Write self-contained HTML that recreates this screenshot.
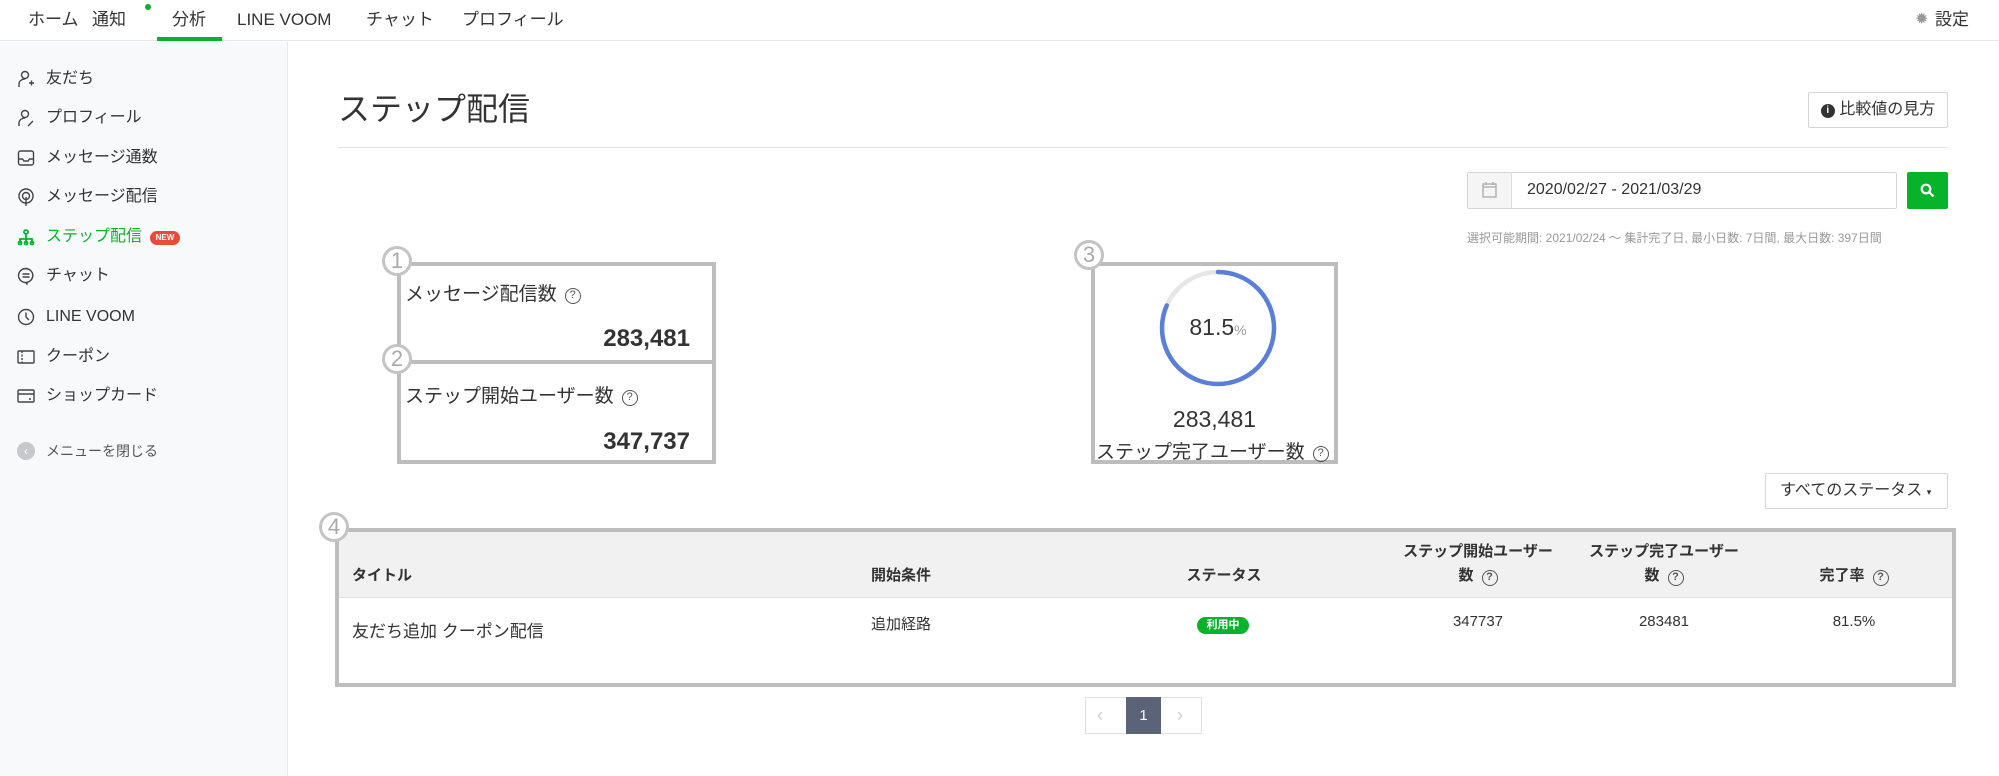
<!DOCTYPE html>
<html><head><meta charset="utf-8"><style>
*{box-sizing:border-box;margin:0;padding:0}
body{width:1999px;height:776px;overflow:hidden;background:#fff;font-family:"Liberation Sans","Noto Sans CJK JP",sans-serif;color:#333;position:relative}
.a{position:absolute;white-space:nowrap}
.nav{position:absolute;left:0;top:0;width:1999px;height:41px;border-bottom:1px solid #e6e6e6;background:#fff}
.nav span{position:absolute;top:8px;font-size:17px;line-height:24px;color:#333}
.side{position:absolute;left:0;top:42px;width:288px;height:734px;background:#f8f9fb;border-right:1px solid #e8e8e8}
.si{position:absolute;left:46px;font-size:16px;line-height:22px;color:#333}
.ic{position:absolute;left:17px;width:18px;height:18px}
.box{position:absolute;border:4px solid #bdbdbd;background:#fff}
.num{position:absolute;width:30px;height:30px;border-radius:50%;border:3px solid #c4c4c4;background:#fff;color:#aaa;font-size:22px;text-align:center;line-height:24px}
.q{display:inline-block;width:16px;height:16px;border:1.5px solid #555;border-radius:50%;font-size:11px;line-height:13px;text-align:center;vertical-align:2px;margin-left:8px;color:#555}
.th{position:absolute;font-size:15px;font-weight:bold;color:#333;text-align:center}
.td{position:absolute;font-size:15px;color:#333}
</style></head><body>
<div class="nav">
<span style="left:28px">ホーム</span>
<span style="left:92px">通知</span><div class="a" style="left:145px;top:4px;width:6px;height:6px;border-radius:50%;background:#06b32a"></div>
<span style="left:172px">分析</span><div class="a" style="left:157px;top:37px;width:65px;height:4px;background:#06b32a"></div>
<span style="left:237px">LINE VOOM</span>
<span style="left:366px">チャット</span>
<span style="left:462px">プロフィール</span>
<span style="left:1915px;color:#999;font-size:16px">✹</span>
<span style="left:1935px">設定</span>
</div>
<div class="side">
<svg class="ic" style="top:28px" viewBox="0 0 18 18" fill="none" stroke="#444" stroke-width="1.4"><circle cx="8" cy="5" r="3.5"/><path d="M2 17v-3c0-3 3-5 6-5M12 13h5M14.5 10.5v5"/></svg><div class="si" style="top:26px">友だち</div>
<svg class="ic" style="top:67px" viewBox="0 0 18 18" fill="none" stroke="#444" stroke-width="1.4"><circle cx="8" cy="5" r="3.5"/><path d="M2 17v-3c0-3 3-5 6-5M11 17l5-5"/></svg><div class="si" style="top:65px">プロフィール</div>
<svg class="ic" style="top:107px" viewBox="0 0 18 18" fill="none" stroke="#444" stroke-width="1.4"><rect x="1.5" y="2" width="15" height="14" rx="2"/><path d="M1.5 10h4l1.5 2h4l1.5-2h4"/></svg><div class="si" style="top:105px">メッセージ通数</div>
<svg class="ic" style="top:146px" viewBox="0 0 18 18" fill="none" stroke="#444" stroke-width="1.4"><circle cx="9" cy="8" r="7"/><circle cx="9" cy="8" r="3.5"/><path d="M9 9v9"/></svg><div class="si" style="top:144px">メッセージ配信</div>
<svg class="ic" style="top:186px" viewBox="0 0 18 18" fill="none" stroke="#06b32a" stroke-width="1.8"><circle cx="9" cy="4" r="2"/><path d="M9 6v4M3 15v-4h12v4M9 10v5"/><circle cx="3" cy="15" r="1.5"/><circle cx="9" cy="15" r="1.5"/><circle cx="15" cy="15" r="1.5"/></svg><div class="si" style="top:184px;color:#06b32a">ステップ配信</div>
<div class="a" style="left:150px;top:189px;width:30px;height:14px;border-radius:7px;background:#e84a3c;color:#fff;font-size:8px;font-weight:bold;text-align:center;line-height:14px">NEW</div>
<svg class="ic" style="top:225px" viewBox="0 0 18 18" fill="none" stroke="#444" stroke-width="1.4"><path d="M9 1.5a7.5 7 0 1 0 0 14l1 2v-2.2A7.5 7 0 0 0 9 1.5z"/><path d="M5.5 7h7M5.5 10h7"/></svg><div class="si" style="top:223px">チャット</div>
<svg class="ic" style="top:266px" viewBox="0 0 18 18" fill="none" stroke="#444" stroke-width="1.4"><circle cx="9" cy="9" r="7.5"/><path d="M9 4.5V9l3 3"/></svg><div class="si" style="top:264px">LINE VOOM</div>
<svg class="ic" style="top:306px" viewBox="0 0 18 18" fill="none" stroke="#444" stroke-width="1.4"><rect x="1" y="3" width="16" height="12" rx="1"/><path d="M5 3v12" stroke-dasharray="2 1.5"/></svg><div class="si" style="top:304px">クーポン</div>
<svg class="ic" style="top:345px" viewBox="0 0 18 18" fill="none" stroke="#444" stroke-width="1.4"><rect x="1" y="3" width="16" height="12" rx="1"/><path d="M1 7h16M12 12h2"/></svg><div class="si" style="top:343px">ショップカード</div>
<div class="a" style="left:17px;top:400px;width:18px;height:18px;border-radius:50%;background:#c8c8cc;color:#fff;font-size:12px;text-align:center;line-height:18px">‹</div>
<div class="si" style="top:398px;font-size:14px;color:#555">メニューを閉じる</div>
</div>
<div class="a" style="left:338px;top:89px;font-size:32px;line-height:40px;color:#333">ステップ配信</div>
<div class="a" style="left:1808px;top:92px;width:140px;height:36px;border:1px solid #d5d5d5;border-radius:2px;font-size:16px;line-height:34px;text-align:center"><span style="display:inline-block;width:14px;height:14px;border-radius:50%;background:#333;color:#fff;font-size:10px;line-height:14px;font-weight:bold;vertical-align:1px">i</span> 比較値の見方</div>
<div class="a" style="left:338px;top:147px;width:1610px;height:1px;background:#e5e5e5"></div>
<div class="a" style="left:1467px;top:172px;width:430px;height:37px;border:1px solid #d5d5d5;border-radius:2px"></div>
<div class="a" style="left:1468px;top:173px;width:44px;height:35px;background:#f5f5f5;border-right:1px solid #ddd"></div>
<svg class="a" style="left:1482px;top:182px" width="15" height="16" viewBox="0 0 15 16" fill="none" stroke="#aaa" stroke-width="1.3"><rect x="1" y="2" width="13" height="13"/><path d="M1 5h13M4 0v3M11 0v3"/></svg>
<div class="a" style="left:1527px;top:181px;font-size:16px;color:#333">2020/02/27 - 2021/03/29</div>
<div class="a" style="left:1907px;top:172px;width:41px;height:37px;background:#06b32a;border-radius:2px"></div>
<svg class="a" style="left:1920px;top:183px" width="15" height="15" viewBox="0 0 15 15" fill="none" stroke="#fff" stroke-width="2.2"><circle cx="6" cy="6" r="4.3"/><path d="M9.5 9.5l4 4"/></svg>
<div class="a" style="left:1467px;top:229px;font-size:12px;color:#999">選択可能期間: 2021/02/24 〜 集計完了日, 最小日数: 7日間, 最大日数: 397日間</div>

<div class="box" style="left:397px;top:262px;width:319px;height:102px"></div>
<div class="box" style="left:397px;top:360px;width:319px;height:104px"></div>
<div class="a" style="left:405px;top:279px;font-size:19px">メッセージ配信数<span class="q">?</span></div>
<div class="a" style="left:500px;top:325px;width:190px;text-align:right;font-size:24px;font-weight:bold">283,481</div>
<div class="a" style="left:405px;top:381px;font-size:19px">ステップ開始ユーザー数<span class="q">?</span></div>
<div class="a" style="left:500px;top:428px;width:190px;text-align:right;font-size:24px;font-weight:bold">347,737</div>
<div class="num" style="left:382px;top:246px">1</div>
<div class="num" style="left:382px;top:344px">2</div>

<div class="box" style="left:1091px;top:262px;width:247px;height:202px"></div>
<svg class="a" style="left:1158px;top:268px" width="120" height="120" viewBox="0 0 120 120"><circle cx="60" cy="60" r="56" fill="none" stroke="#e6e6e6" stroke-width="4.5"/><circle cx="60" cy="60" r="56" fill="none" stroke="#5b7fd6" stroke-width="4.5" stroke-dasharray="286.8 351.9" transform="rotate(-90 60 60)" stroke-linecap="round"/></svg>
<div class="a" style="left:1158px;top:314px;width:120px;text-align:center;font-size:23px">81.5<span style="font-size:14px;color:#999">%</span></div>
<div class="a" style="left:1091px;top:406px;width:247px;text-align:center;font-size:23px">283,481</div>
<div class="a" style="left:1096px;top:437px;font-size:19px">ステップ完了ユーザー数<span class="q">?</span></div>
<div class="num" style="left:1074px;top:240px">3</div>

<div class="a" style="left:1765px;top:473px;width:183px;height:36px;border:1px solid #d5d5d5;border-radius:2px;font-size:16px;line-height:34px;padding-left:14px">すべてのステータス <span style="font-size:9px">▾</span></div>

<div class="box" style="left:335px;top:528px;width:1621px;height:159px"></div>
<div class="a" style="left:339px;top:532px;width:1613px;height:66px;background:#f1f1f2;border-bottom:1px solid #e3e3e3"></div>
<div class="th" style="left:352px;top:564px">タイトル</div>
<div class="th" style="left:871px;top:564px">開始条件</div>
<div class="th" style="left:1184px;top:564px;width:80px">ステータス</div>
<div class="th" style="left:1388px;top:540px;width:180px;line-height:24px">ステップ開始ユーザー<br>数<span class="q" style="vertical-align:0">?</span></div>
<div class="th" style="left:1574px;top:540px;width:180px;line-height:24px">ステップ完了ユーザー<br>数<span class="q" style="vertical-align:0">?</span></div>
<div class="th" style="left:1774px;top:564px;width:160px">完了率<span class="q" style="vertical-align:0">?</span></div>
<div class="td" style="left:352px;top:617px;font-size:17px">友だち追加 クーポン配信</div>
<div class="td" style="left:871px;top:613px">追加経路</div>
<div class="a" style="left:1197px;top:617px;width:52px;height:17px;border-radius:9px;background:#06b32a;color:#fff;font-size:11px;font-weight:bold;text-align:center;line-height:17px">利用中</div>
<div class="td" style="left:1438px;top:613px;width:80px;text-align:center">347737</div>
<div class="td" style="left:1624px;top:613px;width:80px;text-align:center">283481</div>
<div class="td" style="left:1814px;top:613px;width:80px;text-align:center">81.5%</div>
<div class="num" style="left:319px;top:512px">4</div>

<div class="a" style="left:1085px;top:697px;width:117px;height:37px;border:1px solid #e0e0e0"></div>
<div class="a" style="left:1097px;top:705px;color:#ccc;font-size:18px">‹</div>
<div class="a" style="left:1126px;top:697px;width:35px;height:37px;background:#5b6379;color:#fff;font-size:15px;text-align:center;line-height:37px">1</div>
<div class="a" style="left:1177px;top:705px;color:#ccc;font-size:18px">›</div>
</body></html>
